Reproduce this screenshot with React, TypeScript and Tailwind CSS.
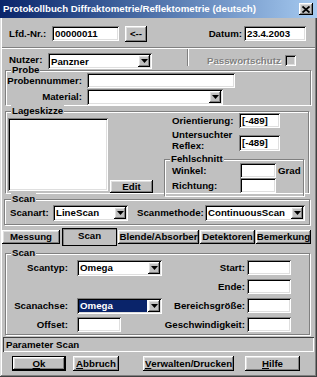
import React from "react";

const raised =
  "shadow-[inset_-1px_-1px_#000,inset_1px_1px_#fff,inset_-2px_-2px_#808080,inset_2px_2px_#dfdfdf]";
const sunken =
  "shadow-[inset_1px_1px_#808080,inset_-1px_-1px_#fff,inset_2px_2px_#000,inset_-2px_-2px_#dfdfdf]";
const etched = "border border-[#808080] shadow-[inset_1px_1px_#fff,1px_1px_#fff]";

type Props = { className?: string; children?: React.ReactNode };

const Field = ({ className = "", children }: Props) => (
  <div className={`h-[15px] bg-white flex items-center pl-[3px] ${sunken} ${className}`}>
    {children}
  </div>
);

const Arrow = () => (
  <svg width="7" height="4" viewBox="0 0 7 4">
    <path d="M0 0h7L3.5 4z" fill="#000" />
  </svg>
);

const Combo = ({ className = "", value, active }: { className?: string; value?: string; active?: boolean }) => (
  <div className={`h-[16px] bg-white flex p-[2px] ${sunken} ${className}`}>
    <div
      className={`flex-1 flex items-center pl-[1px] mr-[1px] ${active ? "bg-[#0a246a] text-white" : ""}`}
    >
      {value}
    </div>
    <div className={`w-[12px] bg-[#c0c0c0] flex items-center justify-center ${raised}`}>
      <Arrow />
    </div>
  </div>
);

const Btn = ({ className = "", children, def }: Props & { def?: boolean }) => (
  <div className={`flex items-center justify-center bg-[#c0c0c0] ${def ? "border border-black" : ""} ${className}`}>
    <div className={`w-full h-full flex items-center justify-center ${raised}`}>{children}</div>
  </div>
);

const Group = ({
  className = "",
  title,
  legendClass = "ml-[5px] leading-[12px]",
  children,
}: Props & { title: string; legendClass?: string }) => (
  <fieldset className={`${etched} ${className}`}>
    <legend className={`${legendClass} px-[1px] bg-[#c0c0c0]`}>{title}</legend>
    {children}
  </fieldset>
);

const Label = ({ className = "", children }: Props) => (
  <div className={`flex items-center justify-end whitespace-nowrap ${className}`}>{children}</div>
);

export default function App() {
  const renderTitle = () => (
    <div className="h-[18px] flex items-center bg-linear-to-r from-[#0a246a] to-[#a6caf0] text-white pl-[3px]">
      <span className="flex-1 whitespace-nowrap">Protokollbuch Diffraktometrie/Reflektometrie (deutsch)</span>
      <div className={`w-[14px] h-[12px] mr-[4px] bg-[#c0c0c0] flex items-center justify-center ${raised}`}>
        <svg width="8" height="7" viewBox="0 0 8 7">
          <path d="M0.5 0.5l7 6M7.5 0.5l-7 6" stroke="#000" strokeWidth="1.8" />
        </svg>
      </div>
    </div>
  );

  const renderHeader = () => (
    <>
      <div className="h-[29px] flex items-center pt-[2px] pl-[9px]">
        <div className="w-[43px]">Lfd.-Nr.:</div>
        <Field className="w-[67px]">00000011</Field>
        <Btn className="ml-[6px] w-[22px] h-[16px]">&lt;--</Btn>
        <div className="ml-auto mr-[2px]">Datum:</div>
        <Field className="w-[62px] mr-[11px]">23.4.2003</Field>
      </div>
      <div className="mx-[2px] h-[2px] border-t border-t-[#808080] border-b border-b-white" />
      <div className="h-[16px] flex items-start leading-[9px]">
        <div className="flex items-start mt-[4px] ml-[9px]">
          <div className="w-[39px] h-[9px] mt-[2px]">Nutzer:</div>
          <Combo className="w-[104px]" value="Panzner" />
        </div>
        <div className="ml-[35px] w-[2px] h-[17px] border-l border-l-[#808080] border-r border-r-white" />
        <div className="ml-[18px] mt-[7px] text-[#808080] [text-shadow:1px_1px_#fff]">Passwortschutz</div>
        <div className={`ml-auto mr-[21px] mt-[6px] w-[11px] h-[11px] bg-[#c0c0c0] ${sunken}`} />
      </div>
    </>
  );

  const renderLageskizze = () => (
    <Group title="Lageskizze" className="ml-[5px] w-[304px] h-[88px] border-b-0">
      <div className="flex items-start">
        <div className={`ml-[2px] mt-[1px] w-[100px] h-[73px] bg-white ${sunken}`} />
        <Btn className="ml-[2px] mt-[63px] w-[43px] h-[13px]">Edit</Btn>
        <div className="ml-[11px] -mt-[4px] w-[140px] flex flex-col">
          <div className="flex items-center h-[15px]">
            <div className="pl-[8px] w-[75px]">Orientierung:</div>
            <Field className="w-[41px]">[-489]</Field>
          </div>
          <div className="flex items-end mt-[1px]">
            <div className="pl-[8px] w-[75px] leading-[11px]">
              Untersuchter
              <br />
              Reflex:
            </div>
            <Field className="w-[41px] h-[16px]">[-489]</Field>
          </div>
          <Group title="Fehlschnitt" className="mt-[2px] w-[140px] h-[43px] border-b-0">
            <div className="-mt-[2px] flex flex-col">
              <div className="flex items-center h-[15px]">
                <div className="pl-[7px] w-[75px]">Winkel:</div>
                <Field className="w-[36px]" />
                <div className="ml-[2px]">Grad</div>
              </div>
              <div className="flex items-center h-[15px]">
                <div className="pl-[7px] w-[75px]">Richtung:</div>
                <Field className="w-[36px]" />
              </div>
            </div>
          </Group>
        </div>
      </div>
    </Group>
  );

  const tabs = ["Messung", "Scan", "Blende/Absorber", "Detektoren", "Bemerkung"];
  const tabWidths = ["w-[58px]", "w-[55px] ml-[2px]", "w-[81px] ml-[1px]", "w-[55px] ml-[1px]", "w-[55px] ml-[1px]"];

  const renderTabs = () => (
    <div className="mt-[3px] h-[18px] flex items-center pl-[2px]">
      {tabs.map((t, i) =>
        t === "Scan" ? (
          <div
            key={t}
            className={`${tabWidths[i]} h-[18px] border border-black bg-[#c0c0c0] shadow-[inset_1px_1px_#808080] flex justify-center pt-[1px]`}
          >
            {t}
          </div>
        ) : (
          <Btn key={t} className={`${tabWidths[i]} h-[14px]`}>
            {t}
          </Btn>
        )
      )}
    </div>
  );

  const renderScanPanel = () => (
    <Group title="Scan" className="mt-[1px] ml-[5px] w-[305px] h-[88px]">
      <div className="mt-[1px] flex flex-col">
        <div className="h-[19px] flex items-start">
          <Label className="w-[62px] h-[16px]">Scantyp:</Label>
          <Combo className="ml-[9px] w-[85px]" value="Omega" />
          <Label className="w-[83px] h-[15px]">Start:</Label>
          <Field className="ml-[2px] w-[44px]" />
        </div>
        <div className="h-[19px] flex items-start">
          <div className="w-[156px]" />
          <Label className="w-[83px] h-[15px]">Ende:</Label>
          <Field className="ml-[2px] w-[44px]" />
        </div>
        <div className="h-[19px] flex items-start">
          <Label className="w-[62px] h-[16px]">Scanachse:</Label>
          <Combo className="ml-[9px] w-[85px]" value="Omega" active />
          <Label className="w-[83px] h-[15px]">Bereichsgröße:</Label>
          <Field className="ml-[2px] w-[44px]" />
        </div>
        <div className="h-[19px] flex items-start">
          <Label className="w-[62px] h-[15px]">Offset:</Label>
          <Field className="ml-[9px] w-[44px]" />
          <div className="w-[41px]" />
          <Label className="w-[83px] h-[15px]">Geschwindigkeit:</Label>
          <Field className="ml-[2px] w-[44px]" />
        </div>
      </div>
    </Group>
  );

  const renderFooter = () => (
    <>
      <div className="mt-[2px] mx-[3px] h-[15px] flex items-center pl-[3px] shadow-[inset_1px_1px_#404040,inset_-1px_-1px_#fff]">
        Parameter Scan
      </div>
      <div className="mt-[4px] h-[15px] flex">
        <Btn def className="ml-[12px] w-[54px]">
          <span className="underline">O</span>k
        </Btn>
        <Btn className="ml-[7px] w-[46px]">
          <span className="underline">A</span>bbruch
        </Btn>
        <Btn className="ml-[24px] w-[91px]">
          <span className="underline">V</span>erwalten/Drucken
        </Btn>
        <Btn className="ml-[11px] w-[55px]">
          <span className="underline">H</span>ilfe
        </Btn>
      </div>
    </>
  );

  return (
    <div className="w-[317px] h-[377px] overflow-hidden bg-[#c0c0c0] text-black font-bold text-[9.7px] leading-[12px] font-['Liberation_Sans',Arial,sans-serif] flex flex-col shadow-[inset_-1px_-1px_#404040,inset_1px_1px_#dfdfdf,inset_-2px_-2px_#808080,inset_2px_2px_#fff]">
      {renderTitle()}
      {renderHeader()}
      <Group
        title="Probe"
        legendClass="ml-[5px] leading-[10px]"
        className="ml-[5px] w-[306px] h-[40px] border-b-0"
      >
        <div className="-mt-[2px] flex flex-col">
          <div className="flex items-center">
            <Label className="w-[76px] h-[15px]">Probennummer:</Label>
            <Field className="ml-[5px] w-[148px]" />
          </div>
          <div className="flex items-center mt-[1px]">
            <Label className="w-[76px] h-[16px]">Material:</Label>
            <Combo className="ml-[5px] w-[136px]" />
          </div>
        </div>
      </Group>
      {renderLageskizze()}
      <Group title="Scan" legendClass="ml-[6px] leading-[12px]" className="ml-[4px] w-[306px] h-[32px]">
        <div className="flex items-center h-[16px]">
          <div className="ml-[5px] w-[43px]">Scanart:</div>
          <Combo className="w-[75px]" value="LineScan" />
          <div className="ml-[9px] w-[68px]">Scanmethode:</div>
          <Combo className="w-[100px]" value="ContinuousScan" />
        </div>
      </Group>
      {renderTabs()}
      {renderScanPanel()}
      {renderFooter()}
    </div>
  );
}
